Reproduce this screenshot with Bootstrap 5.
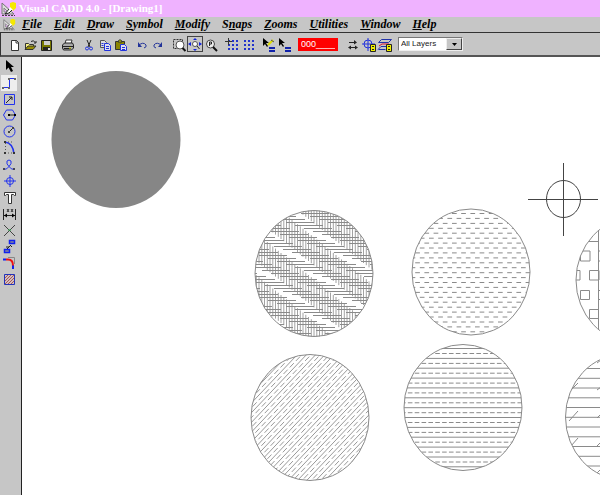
<!DOCTYPE html>
<html lang="en">
<head>
<meta charset="utf-8">
<meta name="viewport" content="width=device-width, initial-scale=1">
<title>Visual CADD 4.0 - [Drawing1]</title>
<link rel="stylesheet" href="https://cdn.jsdelivr.net/npm/bootstrap@5.3.0/dist/css/bootstrap.min.css">
<style>
  body { background: #c6c6c6; color: #000; font-family: "Liberation Sans Narrow", "Liberation Sans", sans-serif; font-size: 9px; line-height: 12px; }
  svg { display: block; flex: none; }
  .title-strip { background: #efb2ff; height: 17px; padding-left: 1px; gap: 2px; }
  .title-strip h1 { font: bold 11px/17px "Liberation Serif", serif; color: #fff; }
  .menu-strip { height: 16px; padding-left: 3px; gap: 6px; border-bottom: 1px solid #333; }
  .menu-strip ul { gap: 12px; }
  .menu-strip a { display: block; font: italic bold 12px/15px "Liberation Serif", serif; color: #000; text-decoration: none; }
  .menu-strip u { text-underline-offset: 1px; }
  .tool-strip { height: 24px; padding-left: 6px; gap: 5px; border-left: 1px solid #333; border-bottom: 2px solid #555; }
  .tool { width: 16px; height: 16px; padding: 0; border: 0; background: transparent; display: block; }
  .tool.pressed { background: #eee; }
  .tool-strip .pressed { background: #c6c6c6; outline: 1px solid #444; outline-offset: -1px; }
  .tool-strip svg { margin-top: 1px; height: 15px; }
  .coord { width: 40px; height: 13px; margin-right: 2px; padding: 0 3px; border: 0; border-radius: 0; background: #f00; color: #fff; font-size: 9px; line-height: 13px; }
  .layer-box { width: 65px; height: 14px; background: #fff; border: 1px solid #777; border-right-color: #eee; border-bottom-color: #eee; }
  .layer-box select { min-width: 0; height: 12px; padding: 0 0 0 2px; border: 0; appearance: none; background: #fff; color: #222; font-size: 8px; line-height: 12px; }
  .drop { width: 16px; background: #c6c6c6; border: 1px solid #eee; border-right-color: #444; border-bottom-color: #444; }
  .side-strip { width: 22px; padding: 1px 0 0 1px; gap: 1px; border-right: 1px solid #222; }
  .paper { background: #fff; min-width: 0; }
</style>
<script src="https://cdn.jsdelivr.net/npm/bootstrap@5.3.0/dist/js/bootstrap.bundle.min.js"></script>
</head>
<body class="d-flex flex-column vh-100 overflow-hidden">
<svg width="0" height="0" class="position-absolute" aria-hidden="true">
  <symbol id="app" viewBox="0 0 16 16">
    <path d="M1 2v11h12z" fill="#ddd" stroke="#777"/><path d="M3 7v4h4z" fill="#efb2ff" stroke="#888"/>
    <path d="M1 14.500h13" stroke="#444" stroke-dasharray="2 1"/><path d="M9 2l3-1 3 1 0 5-3 3-3-3z" fill="#f5e800"/><path d="M9 6l3 3-5 4-3 0z" fill="#fff"/><path d="M8 8l-4 5 4-1 3-3" fill="none" stroke="#222"/>
  </symbol>
</svg>
<header>
  <div class="title-strip d-flex align-items-center">
    <svg width="16" height="16"><use href="#app"/></svg>
    <h1 class="m-0 text-nowrap">Visual CADD 4.0 - [Drawing1]</h1>
  </div>
  <nav class="menu-strip d-flex align-items-center" aria-label="Main menu">
    <svg width="13" height="13"><use href="#app"/></svg>
    <ul class="d-flex list-unstyled m-0">
      <li><a href="#"><u>F</u>ile</a></li><li><a href="#"><u>E</u>dit</a></li><li><a href="#"><u>D</u>raw</a></li><li><a href="#"><u>S</u>ymbol</a></li><li><a href="#"><u>M</u>odify</a></li><li><a href="#">S<u>n</u>aps</a></li><li><a href="#"><u>Z</u>ooms</a></li><li><a href="#"><u>U</u>tilities</a></li><li><a href="#"><u>W</u>indow</a></li><li><a href="#"><u>H</u>elp</a></li>
    </ul>
  </nav>
  <div class="tool-strip d-flex align-items-center" role="toolbar" aria-label="Standard">
    <div class="d-flex">
      <button class="tool" aria-label="New"><svg width="16" height="16"><path d="M4.500 3.500h5l2 2v8h-7z" fill="#fff" stroke="#333"/><path d="M9 3v3h3" fill="none" stroke="#333"/></svg></button>
      <button class="tool" aria-label="Open"><svg width="16" height="16"><path d="M2.500 12V6.500h3l1 1h4V9" fill="#f5f080" stroke="#333"/><path d="M2 12.500l3-3.500h8l-3 3.500z" fill="#998f00" stroke="#333"/><path d="M8 4.500q3-2 4 1m1-1.500v2h-2" fill="none" stroke="#222"/></svg></button>
      <button class="tool" aria-label="Save"><svg width="16" height="16"><path d="M2.500 3.500h10v10h-10z" fill="#777700" stroke="#222"/><path d="M5 4h6v4H5z" fill="#ccc"/><path d="M4 10h7v4H4z" fill="#222"/><path d="M9 11h2v2H9z" fill="#ddd"/></svg></button>
    </div>
    <button class="tool" aria-label="Print"><svg width="16" height="16"><path d="M5 7l1-4h6l-1 4z" fill="#fff" stroke="#333"/><path d="M2.500 8l2-2h8l1 2v3l-2 2h-8l-1-2z" fill="#aaa" stroke="#222"/><path d="M3 9.500h10M4 11.500h7" stroke="#222"/><path d="M9 11h2" stroke="#dd0"/></svg></button>
    <div class="d-flex">
      <button class="tool" aria-label="Cut"><svg width="16" height="16"><path d="M6 3l3 7M10 3l-3 7" fill="none" stroke="#222"/><circle cx="6" cy="11.500" r="1.500" fill="none" stroke="#2233dd"/><circle cx="10" cy="11.500" r="1.500" fill="none" stroke="#2233dd"/></svg></button>
      <button class="tool" aria-label="Copy"><svg width="16" height="16"><path d="M3.500 3.500h4l2 2v5h-6z" fill="#ddd" stroke="#555"/><path d="M7.500 6.500h4l2 2v5h-6z" fill="#dde" stroke="#2233dd"/><path d="M9 9.500h3M9 11.500h3M4.500 6.500h2M4.500 8.500h2" stroke="#2233dd"/></svg></button>
      <button class="tool" aria-label="Paste"><svg width="16" height="16"><path d="M2.500 4.500h9v8h-9z" fill="#8a8400" stroke="#333"/><path d="M5 5l1-2h2l1 2z" fill="#ee0" stroke="#333"/><path d="M7.500 7.500h4l2 2v4h-6z" fill="#dde" stroke="#2233dd"/><path d="M9 10.500h3M9 12.500h3" stroke="#2233dd"/></svg></button>
    </div>
    <div class="d-flex">
      <button class="tool" aria-label="Undo"><svg width="16" height="16"><path d="M4 9q5-5 8-1 1 2-2 3" fill="none" stroke="#223399"/><path d="M4 5v5h4z" fill="#223399"/></svg></button>
      <button class="tool" aria-label="Redo"><svg width="16" height="16"><path d="M12 9q-5-5-8-1-1 2 2 3" fill="none" stroke="#223399"/><path d="M12 5v5H8z" fill="#223399"/></svg></button>
    </div>
    <div class="d-flex">
      <button class="tool" aria-label="Zoom window"><svg width="16" height="16"><path d="M2.500 2.500h9v9h-9z" fill="none" stroke="#333" stroke-dasharray="2 1"/><circle cx="9" cy="8" r="4" fill="#fff" stroke="#555"/><path d="M11.500 11l3 3" stroke="#111" stroke-width="2"/></svg></button>
      <button class="tool pressed" aria-label="Zoom all"><svg width="16" height="16"><circle cx="8" cy="7" r="2.500" fill="#fff" stroke="#555"/><path d="M10 9l2.500 3" stroke="#222"/><path d="M8 1l2 2H6zM8 14l-2-2h4zM1 7l3-2v4zM15 7l-3-2v4z" fill="#1122dd"/></svg></button>
      <button class="tool" aria-label="Zoom previous"><svg width="16" height="16"><circle cx="7.500" cy="7" r="4" fill="#eee" stroke="#444"/><path d="M6.500 9V5h2v2h-2" fill="none" stroke="#222"/><path d="M10 10l4 4" stroke="#111" stroke-width="2"/></svg></button>
    </div>
    <div class="d-flex">
      <button class="tool" aria-label="Snap to grid"><svg width="16" height="16"><path d="M4 4h11M4 8h11M4 12h11" stroke="#2233cc" stroke-width="2" stroke-dasharray="2 2"/><path d="M4.500 1v7M1 4.500h7" stroke="#333"/></svg></button>
      <button class="tool" aria-label="Grid"><svg width="16" height="16"><path d="M4 4h11M4 8h11M4 12h11" stroke="#2233cc" stroke-width="2" stroke-dasharray="2 2"/></svg></button>
    </div>
    <div class="d-flex">
      <button class="tool" aria-label="Match properties"><svg width="16" height="16"><path d="M2 1v8l2-2 2 3 1-1-2-3h3z"/><path d="M7 8l5-5" stroke="#dd0" stroke-width="2"/><path d="M10 3l3 2" stroke="#555"/><path d="M8 11h6M8 14h6" stroke="#1122aa" stroke-width="2"/></svg></button>
      <button class="tool" aria-label="Properties"><svg width="16" height="16"><path d="M2 1v8l2-2 2 3 1-1-2-3h3z"/><path d="M8 11h6M8 14h6" stroke="#1122aa" stroke-width="2"/></svg></button>
    </div>
    <input class="coord" type="text" value="000_________" aria-label="Command">
    <div class="d-flex">
      <button class="tool" aria-label="Continuous"><svg width="16" height="16"><path d="M4 5.500h6M5 10.500h7" stroke="#222"/><path d="M9 3l3 2.500-3 2zM6 8.500v4l-3-2zM10 8.500v4l3-2z" fill="#222"/></svg></button>
      <button class="tool" aria-label="Symbol manager"><svg width="16" height="16"><circle cx="7" cy="7" r="4" fill="none" stroke="#2233dd"/><path d="M7 1v13M1 7h13" stroke="#2233dd"/><path d="M9.500 7.500h5v7h-5z" fill="#ee0" stroke="#222"/><path d="M11 9.500h2M11 12.500h2" stroke="#222"/></svg></button>
      <button class="tool" aria-label="Layer manager"><svg width="16" height="16"><path d="M4.500 2.500h10l-3 3h-10zM1 12.500l3-3h6M1.500 12.500h7" fill="none" stroke="#2233aa"/><path d="M2 9l3-2h7" fill="none" stroke="#dd1133"/><path d="M9.500 7.500h5v7h-5z" fill="#ee0" stroke="#222"/><path d="M11 9.500h2M11 12.500h2" stroke="#222"/></svg></button>
    </div>
    <label class="layer-box d-flex"><select class="flex-fill" aria-label="Layer"><option>All Layers</option></select><span class="drop d-flex align-items-center justify-content-center"><svg class="m-0" width="5" height="3" viewBox="0 0 5 3" style="height:3px"><path d="M0 0h5L2.500 3z"/></svg></span></label>
  </div>
</header>
<div class="d-flex flex-fill overflow-hidden">
  <aside class="side-strip d-flex flex-column flex-shrink-0" role="toolbar" aria-label="Drawing tools">
    <button class="tool" aria-label="Select"><svg width="16" height="16"><path d="M5 2v10l2.500-2.500L10 14l2-1-2-4h3z"/></svg></button>
    <div>
      <button class="tool pressed" aria-label="Line"><svg width="16" height="16"><path d="M2 12.500h6.500v-9H14" fill="none" stroke="#2233ee"/><path d="M1 12h2v2H1zM7 12h2v2H7zM7 3h2v2H7zM13 3h2v2h-2z" fill="#666"/></svg></button>
      <button class="tool" aria-label="Rectangle"><svg width="16" height="16"><path d="M3.500 3.500h10v10h-10z" fill="none" stroke="#2233ee"/><path d="M5 12l6-6M8 6h3v3" fill="none" stroke="#222"/></svg></button>
      <button class="tool" aria-label="Polygon"><svg width="16" height="16"><path d="M5.500 3h6l3 5-3 5h-6l-3-5z" fill="none" stroke="#2233ee"/><path d="M8 8h6" stroke="#222"/><path d="M7 7h2v2H7zM13 7h2v2h-2z"/></svg></button>
      <button class="tool" aria-label="Circle"><svg width="16" height="16"><circle cx="8.500" cy="8.500" r="5.500" fill="none" stroke="#2233ee"/><path d="M8 9l4-4" stroke="#222"/><path d="M7 8h2v2H7zM11 4h2v2h-2z" fill="#444"/></svg></button>
    </div>
    <button class="tool" aria-label="Arc"><svg width="16" height="16"><path d="M4 2q8 1 9 12" fill="none" stroke="#2233ee" stroke-width="1.500"/><path d="M4.500 3v11M4 13h9M4 2l9 0" fill="none" stroke="#555" stroke-dasharray="1 2"/><path d="M3 1h2v2H3zM3 12h2v2H3zM12 12h2v2h-2z" fill="#333"/></svg></button>
    <div>
      <button class="tool" aria-label="Curve"><svg width="16" height="16"><path d="M3 12.500q3 0 5-3 3-3 2-5.500-2-2-4 0-1 3 2 5.500 2 3 5 3" fill="none" stroke="#2233ee"/><path d="M2 11h2v2H2zM12 11h2v2h-2z" fill="#445"/></svg></button>
      <button class="tool" aria-label="Symbol"><svg width="16" height="16"><circle cx="9" cy="8" r="3.500" fill="none" stroke="#2233ee"/><path d="M9 2v12M3 8h12" stroke="#2233ee"/></svg></button>
      <button class="tool" aria-label="Text"><svg width="16" height="16"><path d="M3.500 3.500h11v3h-1l-1-1h-2v9h-3v-9h-2l-1 1h-1z" fill="#fff" stroke="#333"/></svg></button>
    </div>
    <div>
      <button class="tool" aria-label="Dimension"><svg width="16" height="16"><path d="M2.500 3v11M14.500 3v11M3 9.500h11" stroke="#222"/><path d="M3 9.500l3-2v4zM14 9.500l-3-2v4z"/><path d="M6 3l2 3M8 3L6 6M10 3l2 3M12 3l-2 3" stroke="#333"/></svg></button>
      <button class="tool" aria-label="Trim"><svg width="16" height="16"><path d="M3 3l11 11M14 3L3 14" stroke="#444"/><path d="M7 8h3" stroke="#2a4"/></svg></button>
      <button class="tool" aria-label="Copy object"><svg width="16" height="16"><path d="M8.500 2.500h5v3h-5zM3.500 11.500h5v3h-5z" fill="#889" stroke="#1122ee" stroke-width="1.500"/><path d="M10 7l-4 4M9 7l2 2M5 9h3" stroke="#222"/></svg></button>
    </div>
    <div>
      <button class="tool" aria-label="Fillet"><svg width="16" height="16"><path d="M2 4.500h3M12 10v4" stroke="#1122ee" stroke-width="2"/><path d="M5 4.500h2q5 0 5 6" fill="none" stroke="#e11" stroke-width="2"/><path d="M7 2.500h6.500V9" fill="none" stroke="#888"/></svg></button>
      <button class="tool" aria-label="Hatch"><svg width="16" height="16"><path d="M3.500 3.500h10v10h-10z" fill="#d0c0c0" stroke="#2233bb"/><path d="M4 7l3-3M4 10l6-6M4 13l9-9M7 13l6-6M10 13l3-3" stroke="#a55"/></svg></button>
    </div>
  </aside>
  <main class="paper flex-fill">
    <svg width="100%" height="100%" role="img" aria-label="Drawing area with hatched circles">
      <defs id="clips"></defs>
      <g transform="translate(-22 -57)" fill="none" stroke="#8a8a8a" stroke-width="1">
        <ellipse cx="116" cy="139.500" rx="64.500" ry="68.500" fill="#868686" stroke="none"/>
        <g id="hatches"></g>
        <path d="M528 199.500h70M563.500 163v73" stroke="#444"/><ellipse cx="563.500" cy="199" rx="17" ry="18.500" stroke="#444"/>
      </g>
    </svg>
  </main>
</div>
<script>
  const NS = 'http://www.w3.org/2000/svg';
  const add = (parent, tag, attrs) => {
    const el = document.createElementNS(NS, tag);
    for (const k in attrs) el.setAttribute(k, attrs[k]);
    parent.appendChild(el);
    return el;
  };
  const RX = 59, RY = 63;
  // Draws one circle and, clipped to it, the lines of its hatch.
  function hatch(id, cx, cy, layers) {
    const e = { cx, cy, rx: RX, ry: RY };
    add(add(document.getElementById('clips'), 'clipPath', { id }), 'ellipse', e);
    const root = document.getElementById('hatches');
    const g = add(root, 'g', { 'clip-path': `url(#${id})` });
    layers.forEach(([d, attrs]) => add(g, 'path', { d, ...attrs }));
    add(root, 'ellipse', e);
  }
  const rows = (x, y, step, n, shift) => Array.from({ length: n }, (_, i) =>
    `M${x + (shift ? shift * (i % 2) : 0)} ${(y + i * step).toFixed(1)}h140`).join('');

  // Houndstooth: dashes of 28 with gaps of 14, each line stepped from the last
  let hs = '', vs = '';
  for (let i = 0; i < 46; i++)
    for (let k = -2; k < 5; k++) {
      hs += `M${250 + ((i * 9) % 42) + k * 42} ${210.5 + i * 3}h28`;
      vs += `M${(253.5 + i * 2.75).toFixed(1)} ${(189 + ((i * 2.2) % 42) + k * 42).toFixed(1)}v28`;
    }
  hatch('c1', 314, 273.5, [[hs, {}], [vs, { 'stroke-width': .8 }]]);
  // Staggered dashes
  hatch('c2', 471, 272, [[rows(406, 213.5, 4.93, 25, 4.6), { 'stroke-dasharray': '4.7 4.5' }]]);
  // Diagonals, solid and dashed
  let so = '', da = '';
  for (let x = 100; x < 380; x += 9.2) { so += `M${x} 485l130 -137`; da += `M${x + 4.6} 485l130 -137`; }
  hatch('c3', 310, 417.5, [[so, { stroke: '#999' }], [da, { stroke: '#999', 'stroke-dasharray': '6 3' }]]);
  // Solid and dashed rows
  hatch('c4', 463, 407.5, [[rows(400, 348.5, 9.86, 13), {}], [rows(401, 353.5, 9.86, 12), { 'stroke-dasharray': '4.6 2.25' }]]);
  // Squares
  hatch('c5', 635, 280, [['M589 241.500h10M580.500 251h9.500v10h-9.500zM570 270.500h10v9.500h-10zM589.500 270.500h9.500v9.500h-9.500zM580.500 290.500h9v9h-9zM589.500 309.500h9v9h-9zM598.500 200v160M598 251h9M598 261h9M598 290.500h9M598 299.500h9', {}]]);
  // Brick rows with ticks
  hatch('c6', 624.5, 417, [[rows(560, 368.5, 9.75, 11), {}], ['M570 391l8-8M569 421l9-10M571 446l7-8M597 390l4-3M597 418l4-4M597 446l4-4M597 363l4-3M597 473l4-4', {}]]);
</script>
</body>
</html>
